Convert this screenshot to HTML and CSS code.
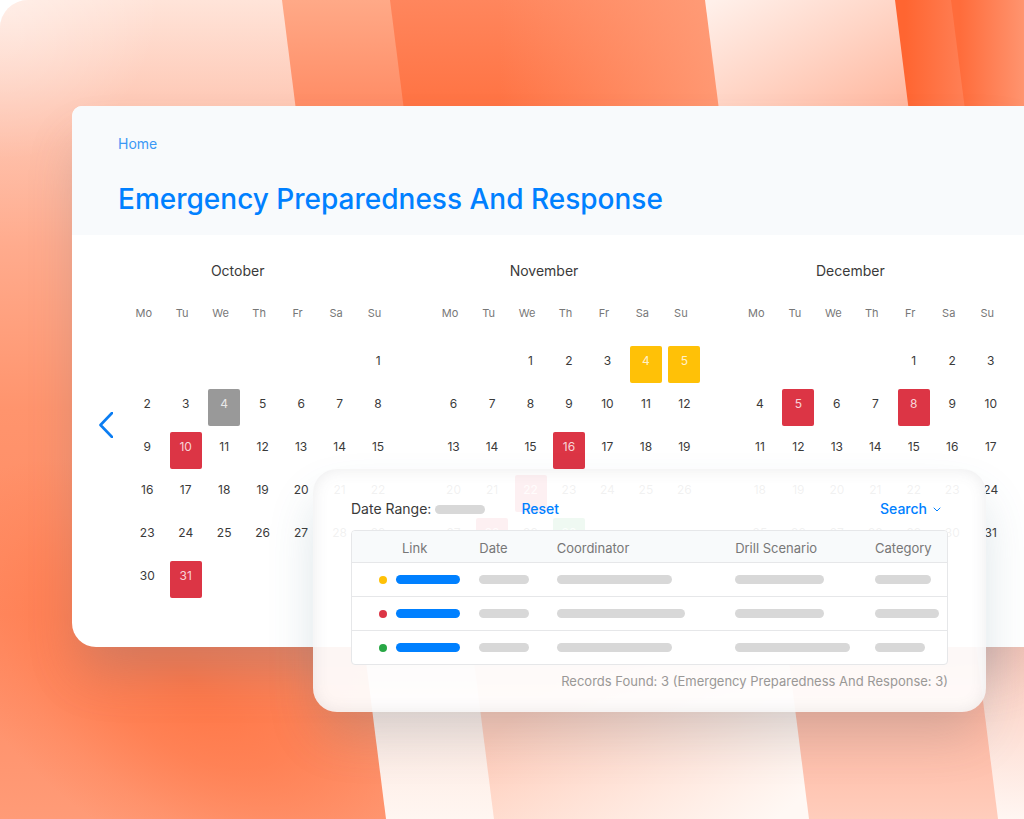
FILE: index.html
```html
<!DOCTYPE html>
<html lang="en">
<head>
  <meta charset="UTF-8">
  <title>Emergency Preparedness And Response</title>
  <meta name="viewport" content="width=device-width, initial-scale=1">
  <link rel="stylesheet" href="styles.css">
</head>
<body>
<div class="stage">

  <!-- striped background -->
  <svg class="backdrop" viewBox="0 0 1024 819" preserveAspectRatio="none" aria-hidden="true">
    <defs>
      <linearGradient id="bandA" x1="0" y1="0" x2="0" y2="1">
        <stop offset="0" stop-color="#ffe4d9"/>
        <stop offset=".13" stop-color="#fec8b5"/>
        <stop offset=".3" stop-color="#ffab8d"/>
        <stop offset=".5" stop-color="#ff946d"/>
        <stop offset=".75" stop-color="#ff8a62"/>
        <stop offset="1" stop-color="#ff9b77"/>
      </linearGradient>
      <radialGradient id="glowA" gradientUnits="userSpaceOnUse" cx="0" cy="0" r="1" gradientTransform="translate(190 680) rotate(35) scale(300 170)">
        <stop offset="0" stop-color="#ff7443" stop-opacity=".9"/>
        <stop offset=".4" stop-color="#ff7443" stop-opacity=".6"/>
        <stop offset=".75" stop-color="#ff7443" stop-opacity=".2"/>
        <stop offset="1" stop-color="#ff7443" stop-opacity="0"/>
      </radialGradient>
      <radialGradient id="cornerA" gradientUnits="userSpaceOnUse" cx="0" cy="0" r="160">
        <stop offset="0" stop-color="#fff" stop-opacity=".4"/>
        <stop offset="1" stop-color="#fff" stop-opacity="0"/>
      </radialGradient>
      <linearGradient id="bandB" x1="0" y1="0" x2="0" y2="1">
        <stop offset="0" stop-color="#ffa987"/>
        <stop offset=".13" stop-color="#ff8c65"/>
        <stop offset=".8" stop-color="#fde0d6"/>
        <stop offset="1" stop-color="#fff6f1"/>
      </linearGradient>
      <linearGradient id="bandC" x1="0" y1="0" x2="0" y2="1">
        <stop offset="0" stop-color="#ff865d"/>
        <stop offset=".13" stop-color="#ff7343"/>
        <stop offset=".85" stop-color="#ffc5b2"/>
        <stop offset="1" stop-color="#ffd3c2"/>
      </linearGradient>
      <linearGradient id="fadeC" gradientUnits="userSpaceOnUse" x1="500" y1="0" x2="720" y2="0">
        <stop offset="0" stop-color="#ffa17e" stop-opacity="0"/>
        <stop offset="1" stop-color="#ffa17e" stop-opacity=".8"/>
      </linearGradient>
      <linearGradient id="lightC" gradientUnits="userSpaceOnUse" x1="580" y1="660" x2="740" y2="850">
        <stop offset="0" stop-color="#fff8f4" stop-opacity="0"/>
        <stop offset="1" stop-color="#fff8f4"/>
      </linearGradient>
      <linearGradient id="bandD" gradientUnits="userSpaceOnUse" x1="715" y1="0" x2="800" y2="160">
        <stop offset="0" stop-color="#fff0ea"/>
        <stop offset=".5" stop-color="#ffd5c6"/>
        <stop offset="1" stop-color="#ffb8a0"/>
      </linearGradient>
      <linearGradient id="bandD2" gradientUnits="userSpaceOnUse" x1="0" y1="640" x2="0" y2="819">
        <stop offset="0" stop-color="#ffa68c"/>
        <stop offset="1" stop-color="#ffcdbc"/>
      </linearGradient>
      <linearGradient id="bandE" gradientUnits="userSpaceOnUse" x1="905" y1="0" x2="965" y2="0">
        <stop offset="0" stop-color="#ff6531"/>
        <stop offset="1" stop-color="#ff8056"/>
      </linearGradient>
      <linearGradient id="bandF" gradientUnits="userSpaceOnUse" x1="960" y1="0" x2="1024" y2="0">
        <stop offset="0" stop-color="#ff6c3b"/>
        <stop offset="1" stop-color="#ff946f"/>
      </linearGradient>
      <linearGradient id="bandG" gradientUnits="userSpaceOnUse" x1="1024" y1="640" x2="1010" y2="819">
        <stop offset="0" stop-color="#fdc9b9"/>
        <stop offset="1" stop-color="#fff6f2"/>
      </linearGradient>
    </defs>
    <rect width="1024" height="819" fill="url(#bandA)"/>
    <rect width="1024" height="819" fill="url(#glowA)"/>
    <rect width="160" height="160" fill="url(#cornerA)"/>
    <path d="M282 0H1024V819H386Z" fill="url(#bandB)"/>
    <path d="M390 0H1024V819H494Z" fill="url(#bandC)"/>
    <path d="M390 0H1024V300H428Z" fill="url(#fadeC)"/>
    <path d="M466 600H1024V819H494Z" fill="url(#lightC)"/>
    <path d="M705 0H1024V400H756Z" fill="url(#bandD)"/>
    <path d="M756 400H1024V819H809Z" fill="url(#bandD2)"/>
    <path d="M895 0H1024V400H945Z" fill="url(#bandE)"/>
    <path d="M951 0H1024V400H1002Z" fill="url(#bandF)"/>
    <path d="M945 400H1024V819H998Z" fill="url(#bandG)"/>
  </svg>

  <main class="card">
    <header class="card-header">
      <a class="crumb" href="#">Home</a>
      <h1>Emergency Preparedness And Response</h1>
    </header>

    <div class="card-body">
      <button class="prev" type="button" aria-label="Previous months">
        <svg viewBox="0 0 14 26"><path d="M13 1L1.5 13L13 25"/></svg>
      </button>

      <div class="months">
        <table class="month">
          <caption>October</caption>
          <thead>
            <tr><th>Mo</th><th>Tu</th><th>We</th><th>Th</th><th>Fr</th><th>Sa</th><th>Su</th></tr>
          </thead>
          <tbody>
            <tr><td></td><td></td><td></td><td></td><td></td><td></td><td>1</td></tr>
            <tr><td>2</td><td>3</td><td><span class="day gray">4</span></td><td>5</td><td>6</td><td>7</td><td>8</td></tr>
            <tr><td>9</td><td><span class="day red">10</span></td><td>11</td><td>12</td><td>13</td><td>14</td><td>15</td></tr>
            <tr><td>16</td><td>17</td><td>18</td><td>19</td><td>20</td><td>21</td><td>22</td></tr>
            <tr><td>23</td><td>24</td><td>25</td><td>26</td><td>27</td><td>28</td><td>29</td></tr>
            <tr><td>30</td><td><span class="day red">31</span></td><td></td><td></td><td></td><td></td><td></td></tr>
          </tbody>
        </table>

        <table class="month">
          <caption>November</caption>
          <thead>
            <tr><th>Mo</th><th>Tu</th><th>We</th><th>Th</th><th>Fr</th><th>Sa</th><th>Su</th></tr>
          </thead>
          <tbody>
            <tr><td></td><td></td><td>1</td><td>2</td><td>3</td><td><span class="day yellow">4</span></td><td><span class="day yellow">5</span></td></tr>
            <tr><td>6</td><td>7</td><td>8</td><td>9</td><td>10</td><td>11</td><td>12</td></tr>
            <tr><td>13</td><td>14</td><td>15</td><td><span class="day red">16</span></td><td>17</td><td>18</td><td>19</td></tr>
            <tr><td>20</td><td>21</td><td><span class="day red">22</span></td><td>23</td><td>24</td><td>25</td><td>26</td></tr>
            <tr><td>27</td><td><span class="day red">28</span></td><td>29</td><td><span class="day green">30</span></td><td></td><td></td><td></td></tr>
          </tbody>
        </table>

        <table class="month">
          <caption>December</caption>
          <thead>
            <tr><th>Mo</th><th>Tu</th><th>We</th><th>Th</th><th>Fr</th><th>Sa</th><th>Su</th></tr>
          </thead>
          <tbody>
            <tr><td></td><td></td><td></td><td></td><td>1</td><td>2</td><td>3</td></tr>
            <tr><td>4</td><td><span class="day red">5</span></td><td>6</td><td>7</td><td><span class="day red">8</span></td><td>9</td><td>10</td></tr>
            <tr><td>11</td><td>12</td><td>13</td><td>14</td><td>15</td><td>16</td><td>17</td></tr>
            <tr><td>18</td><td>19</td><td>20</td><td>21</td><td>22</td><td>23</td><td>24</td></tr>
            <tr><td>25</td><td>26</td><td>27</td><td>28</td><td>29</td><td>30</td><td>31</td></tr>
          </tbody>
        </table>
      </div>
    </div>
  </main>

  <!-- records panel over the calendar -->
  <section class="panel">
    <div class="toolbar">
      <span class="range">Date Range: <span class="bar w50"></span></span>
      <button class="action" type="button">Reset</button>
      <button class="action search" type="button">Search
        <svg viewBox="0 0 8 5"><path d="M1 1L4 4L7 1"/></svg>
      </button>
    </div>

    <table class="records">
      <colgroup>
        <col class="col-dot"><col class="col-link"><col class="col-date"><col class="col-coord"><col class="col-drill"><col>
      </colgroup>
      <thead>
        <tr><th></th><th class="link-head">Link</th><th>Date</th><th>Coordinator</th><th>Drill Scenario</th><th>Category</th></tr>
      </thead>
      <tbody>
        <tr>
          <td class="status"><span class="dot yellow"></span></td>
          <td><span class="bar blue w64"></span></td>
          <td><span class="bar w50"></span></td>
          <td><span class="bar w115"></span></td>
          <td><span class="bar w89"></span></td>
          <td><span class="bar w56"></span></td>
        </tr>
        <tr>
          <td class="status"><span class="dot red"></span></td>
          <td><span class="bar blue w64"></span></td>
          <td><span class="bar w50"></span></td>
          <td><span class="bar w128"></span></td>
          <td><span class="bar w89"></span></td>
          <td><span class="bar w64"></span></td>
        </tr>
        <tr>
          <td class="status"><span class="dot green"></span></td>
          <td><span class="bar blue w64"></span></td>
          <td><span class="bar w50"></span></td>
          <td><span class="bar w115"></span></td>
          <td><span class="bar w115"></span></td>
          <td><span class="bar w50"></span></td>
        </tr>
      </tbody>
    </table>

    <p class="found">Records Found: 3 (Emergency Preparedness And Response: 3)</p>
  </section>

</div>
</body>
</html>
```
FILE: styles.css
```css
* {
  box-sizing: border-box;
}

body {
  margin: 0;
  background: #fff;
  color: #3a3a3a;
  font-family: Inter, "Liberation Sans", sans-serif;
  font-size: 14px;
  line-height: 20px;
}

button {
  padding: 0;
  border: none;
  background: none;
  font: inherit;
  cursor: pointer;
}

svg path {
  stroke-linecap: round;
  stroke-linejoin: round;
}

.stage {
  position: relative;
  min-height: 100vh;
  padding: 106px 0 60px 72px;
  overflow: hidden;
  border-top-left-radius: 28px;
}

.backdrop {
  position: absolute;
  top: 0;
  left: 0;
  width: 100%;
  height: 100%;
}

/* calendar card */
.card {
  position: relative;
  overflow: hidden;
  background: #fff;
  border-radius: 10px 0 0 24px;
  box-shadow: 0 32px 50px -8px rgba(110, 120, 140, 0.3);
}

.card-header {
  padding: 28px 46px 16px;
  background: #f8fafc;
}

.crumb {
  display: block;
  width: max-content;
  color: #3b98f5;
  text-decoration: none;
}

h1 {
  margin: 25px 0 0;
  color: #0080ff;
  font-size: 28px;
  font-weight: 500;
  line-height: 40px;
}

.card-body {
  display: flex;
  align-items: center;
  gap: 15px;
  padding: 26px 14px 43px 27px;
}

.prev {
  width: 14px;
  height: 26px;
  margin-bottom: 16px;
}

.prev svg {
  display: block;
  fill: none;
  stroke: #0b7df2;
  stroke-width: 2.6;
}

.months {
  display: flex;
  flex: 1;
  align-items: flex-start;
  gap: 37px;
}

.month {
  flex: 1;
  width: 0;
  table-layout: fixed;
  border-collapse: collapse;
  text-align: center;
}

.month caption {
  padding-right: 50px;
}

.month th {
  height: 65px;
  padding: 0 7px 2px 0;
  color: #777;
  font-size: 11px;
  font-weight: 400;
}

.month td {
  height: 43px;
  padding: 0;
  font-size: 12px;
  line-height: 30px;
  vertical-align: top;
}

.day {
  display: block;
  width: 32px;
  height: 37px;
  margin: 0 auto;
  border-radius: 2px;
  color: rgba(255, 255, 255, 0.8);
}

.gray {
  background: #999;
}

.red {
  background: #dc3545;
}

.yellow {
  background: #ffc107;
}

.green {
  background: #28a745;
}

/* records panel */
.panel {
  position: absolute;
  top: 469px;
  left: 313px;
  right: 38px;
  padding: 30px 38px 21px;
  background: rgba(255, 255, 255, 0.93);
  border-radius: 24px;
  box-shadow: 0 28px 50px -4px rgba(60, 110, 130, 0.2), inset 0 0 16px rgba(90, 90, 100, 0.12);
}

.toolbar {
  display: flex;
  align-items: center;
  gap: 36px;
  margin-bottom: 11px;
}

.range {
  display: flex;
  align-items: center;
  gap: 4px;
}

.action {
  color: #0080ff;
  font-weight: 500;
}

.search {
  display: flex;
  align-items: center;
  gap: 6px;
  margin-left: auto;
  margin-right: 7px;
}

.search svg {
  width: 8px;
  fill: none;
  stroke: #0080ff;
}

.bar {
  display: block;
  height: 9px;
  background: #d8d8d8;
  border-radius: 5px;
}

.bar.blue {
  background: #0080ff;
}

.w50 { width: 50px; }
.w56 { width: 56px; }
.w64 { width: 64px; }
.w89 { width: 89px; }
.w115 { width: 115px; }
.w128 { width: 128px; }

.records {
  width: 100%;
  table-layout: fixed;
  overflow: hidden;
  background: #fff;
  border: 1px solid #e6e7e9;
  border-radius: 4px;
  border-spacing: 0;
  text-align: left;
}

.col-dot { width: 44px; }
.col-link { width: 14%; }
.col-date { width: 13%; }
.col-coord { width: 30%; }
.col-drill { width: 23.5%; }

.records th {
  height: 31px;
  padding: 3px 0 0;
  background: #f8fafb;
  color: #777;
  font-size: 13px;
  font-weight: 400;
}

.records .link-head {
  padding-left: 6px;
}

.records td {
  height: 34px;
  padding: 0 0 1px;
  border-top: 1px solid #e6e7e9;
}

.dot {
  display: block;
  width: 8px;
  height: 8px;
  margin: 2px 9px 0 auto;
  border-radius: 50%;
}

.found {
  margin: 6px 0 0;
  color: #9a9896;
  font-size: 13px;
  text-align: right;
}
```
